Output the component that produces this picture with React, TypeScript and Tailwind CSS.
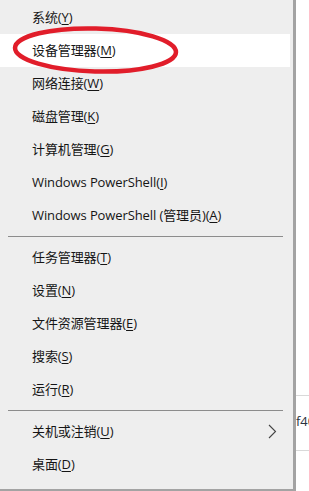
import React from "react";

type Item = { label: string; key: string; hl?: boolean; sub?: boolean };

const groups: Item[][] = [
  [
    { label: "系统", key: "Y" },
    { label: "设备管理器", key: "M", hl: true },
    { label: "网络连接", key: "W" },
    { label: "磁盘管理", key: "K" },
    { label: "计算机管理", key: "G" },
    { label: "Windows PowerShell", key: "I" },
    { label: "Windows PowerShell (管理员)", key: "A" },
  ],
  [
    { label: "任务管理器", key: "T" },
    { label: "设置", key: "N" },
    { label: "文件资源管理器", key: "E" },
    { label: "搜索", key: "S" },
    { label: "运行", key: "R" },
  ],
  [
    { label: "关机或注销", key: "U", sub: true },
    { label: "桌面", key: "D" },
  ],
];

const font = { fontFamily: '"Open Sans", "Noto Sans CJK SC", sans-serif' };

function Row({ item }: { item: Item }) {
  return (
    <div
      className={`h-[33px] mr-[3px] flex items-center pl-8 pr-3 text-[13px] text-[#151515] ${
        item.hl ? "bg-white" : ""
      }`}
    >
      <span className="flex-1 whitespace-nowrap tracking-[-0.1px]">
        {item.label}(<span className="underline underline-offset-2">{item.key}</span>)
      </span>
      {item.sub && (
        <svg width="9" height="15" viewBox="0 0 9 15" className="mr-[1px]">
          <path d="M1 1 L7.5 7.5 L1 14" fill="none" stroke="#444" strokeWidth="1.1" />
        </svg>
      )}
    </div>
  );
}

export default function App() {
  return (
    <div className="flex w-[309px] h-[491px] bg-white overflow-hidden" style={font}>
      <div className="relative w-[296px] h-[491px] shrink-0 bg-[#eeeeee] border-r-[3px] border-b-2 border-[#a3a3a3] flex flex-col pt-px">
        {groups.map((g, gi) => (
          <React.Fragment key={gi}>
            {gi > 0 && (
              <div className="h-[9px] flex items-center">
                <div className="h-px bg-[#8c8c8c] ml-2 mr-[10px] flex-1" />
              </div>
            )}
            {g.map((it) => (
              <Row key={it.key} item={it} />
            ))}
          </React.Fragment>
        ))}
        <svg
          className="absolute left-0 top-0 pointer-events-none"
          width="296"
          height="100"
          viewBox="0 0 296 100"
        >
          <ellipse
            cx="95.5"
            cy="50"
            rx="80.5"
            ry="21.5"
            transform="rotate(1.5 95.5 50)"
            fill="none"
            stroke="#e11d2a"
            strokeWidth="4.5"
          />
        </svg>
      </div>
      <div className="flex-1 flex flex-col overflow-hidden">
        <div className="h-[395px]" />
        <div className="h-[56px] border-t border-b border-[#d9d9d9] flex items-center">
          <span className="text-[13px] text-[#2a3440] whitespace-nowrap -mt-[3px]">f40</span>
        </div>
      </div>
    </div>
  );
}
